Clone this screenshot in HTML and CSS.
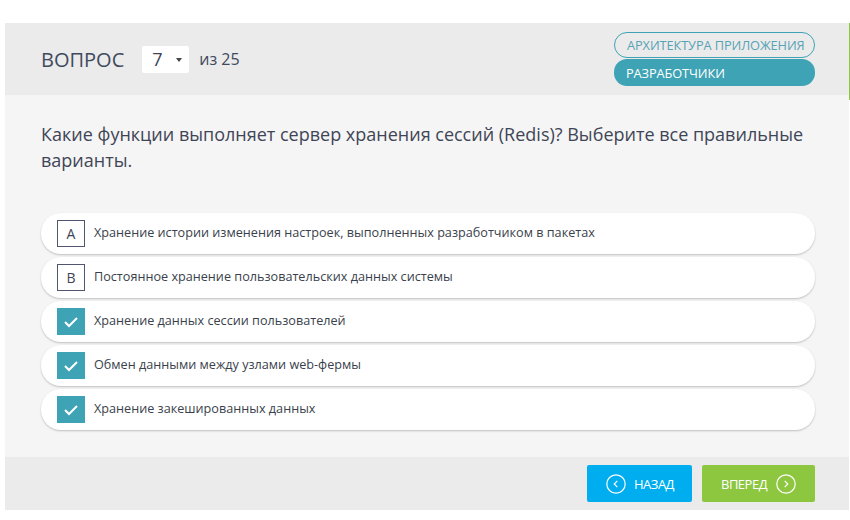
FILE: index.html
```html
<!DOCTYPE html>
<html lang="ru">
<head>
<meta charset="utf-8">
<link rel="stylesheet" href="styles.css">
</head>
<body>
<div class="page">
  <div class="edge"></div>
  <header class="head">
    <div class="qnum">
      <span class="qlabel">ВОПРОС</span>
      <span class="select">7 <span class="caret"></span></span>
      <span class="total">из 25</span>
    </div>
    <div class="tags">
      <span class="tag tag-outline">АРХИТЕКТУРА ПРИЛОЖЕНИЯ</span>
      <span class="tag tag-fill">РАЗРАБОТЧИКИ</span>
    </div>
  </header>
  <main class="body">
    <p class="question">Какие функции выполняет сервер хранения сессий (Redis)? Выберите все правильные варианты.</p>
    <ul class="options">
      <li class="opt"><span class="box">A</span><span class="txt">Хранение истории изменения настроек, выполненных разработчиком в пакетах</span></li>
      <li class="opt"><span class="box">B</span><span class="txt">Постоянное хранение пользовательских данных системы</span></li>
      <li class="opt"><span class="box checked"><svg width="16" height="12" viewBox="0 0 16 12"><polyline points="2,6 6,10 14,2" fill="none" stroke="#fff" stroke-width="2"/></svg></span><span class="txt">Хранение данных сессии пользователей</span></li>
      <li class="opt"><span class="box checked"><svg width="16" height="12" viewBox="0 0 16 12"><polyline points="2,6 6,10 14,2" fill="none" stroke="#fff" stroke-width="2"/></svg></span><span class="txt">Обмен данными между узлами web-фермы</span></li>
      <li class="opt"><span class="box checked"><svg width="16" height="12" viewBox="0 0 16 12"><polyline points="2,6 6,10 14,2" fill="none" stroke="#fff" stroke-width="2"/></svg></span><span class="txt">Хранение закешированных данных</span></li>
    </ul>
  </main>
  <footer class="foot">
    <button class="btn btn-back"><svg width="20" height="20" viewBox="0 0 20 20"><circle cx="10" cy="10" r="9.2" fill="none" stroke="#fff" stroke-width="1.2"/><polyline points="11.3,6.8 8.2,10 11.3,13.2" fill="none" stroke="#fff" stroke-width="1.2"/></svg><span>НАЗАД</span></button>
    <button class="btn btn-next"><span>ВПЕРЕД</span><svg width="20" height="20" viewBox="0 0 20 20"><circle cx="10" cy="10" r="9.2" fill="none" stroke="#fff" stroke-width="1.2"/><polyline points="8.7,6.8 11.8,10 8.7,13.2" fill="none" stroke="#fff" stroke-width="1.2"/></svg></button>
  </footer>
</div>
</body>
</html>
```
FILE: styles.css
```css
* { box-sizing: border-box; }
html, body { margin: 0; padding: 0; background: #fff; }
body { font-family: "Open Sans", "Noto Sans", sans-serif; color: #3f4556; }

.page {
  position: relative;
  width: 844px;
  margin: 23px 0 0 5px;
}
.edge {
  position: absolute;
  right: -1px;
  top: 0;
  width: 1px;
  height: 77px;
  background: #8dc63f;
}

.head {
  height: 72px;
  background: #ebebeb;
  display: flex;
  align-items: center;
  justify-content: space-between;
  padding: 0 34px 0 36px;
}
.qnum { display: flex; align-items: center; }
.qlabel { font-size: 20px; color: #3f4a5e; }
.select {
  margin-left: 18px;
  width: 47px;
  height: 27px;
  background: #fff;
  border-radius: 2px;
  display: flex;
  align-items: center;
  padding-left: 10px;
  font-size: 18px;
  color: #3f4556;
  position: relative;
}
.caret {
  position: absolute;
  left: 34px;
  top: 12px;
  width: 0; height: 0;
  border-left: 3.5px solid transparent;
  border-right: 3.5px solid transparent;
  border-top: 4px solid #444;
}
.total { margin-left: 10px; font-size: 16px; color: #3f4a5e; }

.tags { display: flex; flex-direction: column; gap: 1px; width: 201px; }
.tag {
  height: 26px;
  border-radius: 13px;
  display: flex;
  align-items: center;
  padding-left: 12px;
  font-size: 12.8px;
  letter-spacing: -0.1px;
}
.tag-outline { border: 1px solid #3ea3b5; color: #57a3b5; }
.tag-fill { background: #3ea3b5; color: #fff; height: 27px; }

.body {
  background: #f5f5f5;
  padding: 26px 34px 27px 36px;
}
.question {
  margin: 0 0 40px;
  font-size: 18px;
  line-height: 26px;
  color: #3f4556;
}
.options { list-style: none; margin: 0; padding: 0; }
.opt {
  height: 41px;
  margin-bottom: 3px;
  background: #fff;
  border-radius: 20px;
  box-shadow: 0 1px 2px rgba(0,0,0,0.22);
  display: flex;
  align-items: center;
  padding-left: 16px;
}
.opt:last-child { margin-bottom: 0; }
.box {
  width: 28px;
  height: 27px;
  border: 1px solid #505670;
  display: flex;
  align-items: center;
  justify-content: center;
  font-size: 14px;
  color: #3f4556;
  flex: none;
}
.box.checked { background: #3ea3b5; border-color: #3ea3b5; }
.txt { margin: 0 0 3px 9px; font-size: 12.65px; color: #3a3f4c; }

.foot {
  height: 53px;
  background: #ebebeb;
  display: flex;
  justify-content: flex-end;
  align-items: flex-start;
  gap: 10px;
  padding: 8px 34px 0 0;
}
.btn {
  height: 37px;
  border: 0;
  border-radius: 2px;
  color: #fff;
  font-family: "Open Sans", sans-serif;
  font-size: 13px;
  letter-spacing: -0.5px;
  display: flex;
  align-items: center;
  padding: 0;
  cursor: pointer;
}
.btn-back { width: 105px; background: #00aeef; padding-left: 19px; gap: 8px; }
.btn-next { width: 113px; background: #8dc63f; padding-left: 19px; gap: 9px; }
```
